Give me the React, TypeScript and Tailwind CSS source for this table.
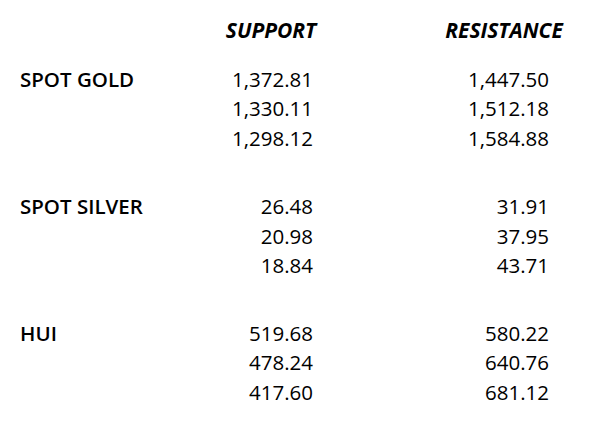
import React from "react";

type Group = { label: string; rows: [string, string][]; mt: string };

const groups: Group[] = [
  {
    label: "SPOT GOLD",
    rows: [
      ["1,372.81", "1,447.50"],
      ["1,330.11", "1,512.18"],
      ["1,298.12", "1,584.88"],
    ],
    mt: "mt-[19px]",
  },
  {
    label: "SPOT SILVER",
    rows: [
      ["26.48", "31.91"],
      ["20.98", "37.95"],
      ["18.84", "43.71"],
    ],
    mt: "mt-[39px]",
  },
  {
    label: "HUI",
    rows: [
      ["519.68", "580.22"],
      ["478.24", "640.76"],
      ["417.60", "681.12"],
    ],
    mt: "mt-[38px]",
  },
];

export default function App() {
  return (
    <div
      className="w-[600px] h-[423px] bg-white text-black pl-[20px] pt-[16px] text-[20.5px] leading-[29.5px] font-medium"
      style={{ fontFamily: '"Open Sans", "Noto Sans", sans-serif' }}
    >
      <div className="grid grid-cols-[209px_84px_152px_84px] text-[21px]">
        <div />
        <div className="flex justify-center whitespace-nowrap italic font-bold">SUPPORT</div>
        <div />
        <div className="flex justify-center whitespace-nowrap italic font-bold pr-[6px]">RESISTANCE</div>
      </div>
      {groups.map((g) => (
        <div key={g.label} className={`${g.mt} grid grid-cols-[209px_84px_152px_84px]`}>
          {g.rows.map((r, i) => (
            <React.Fragment key={i}>
              <div className="font-semibold whitespace-nowrap">{i === 0 ? g.label : ""}</div>
              <div className="text-right">{r[0]}</div>
              <div />
              <div className="text-right">{r[1]}</div>
            </React.Fragment>
          ))}
        </div>
      ))}
    </div>
  );
}
